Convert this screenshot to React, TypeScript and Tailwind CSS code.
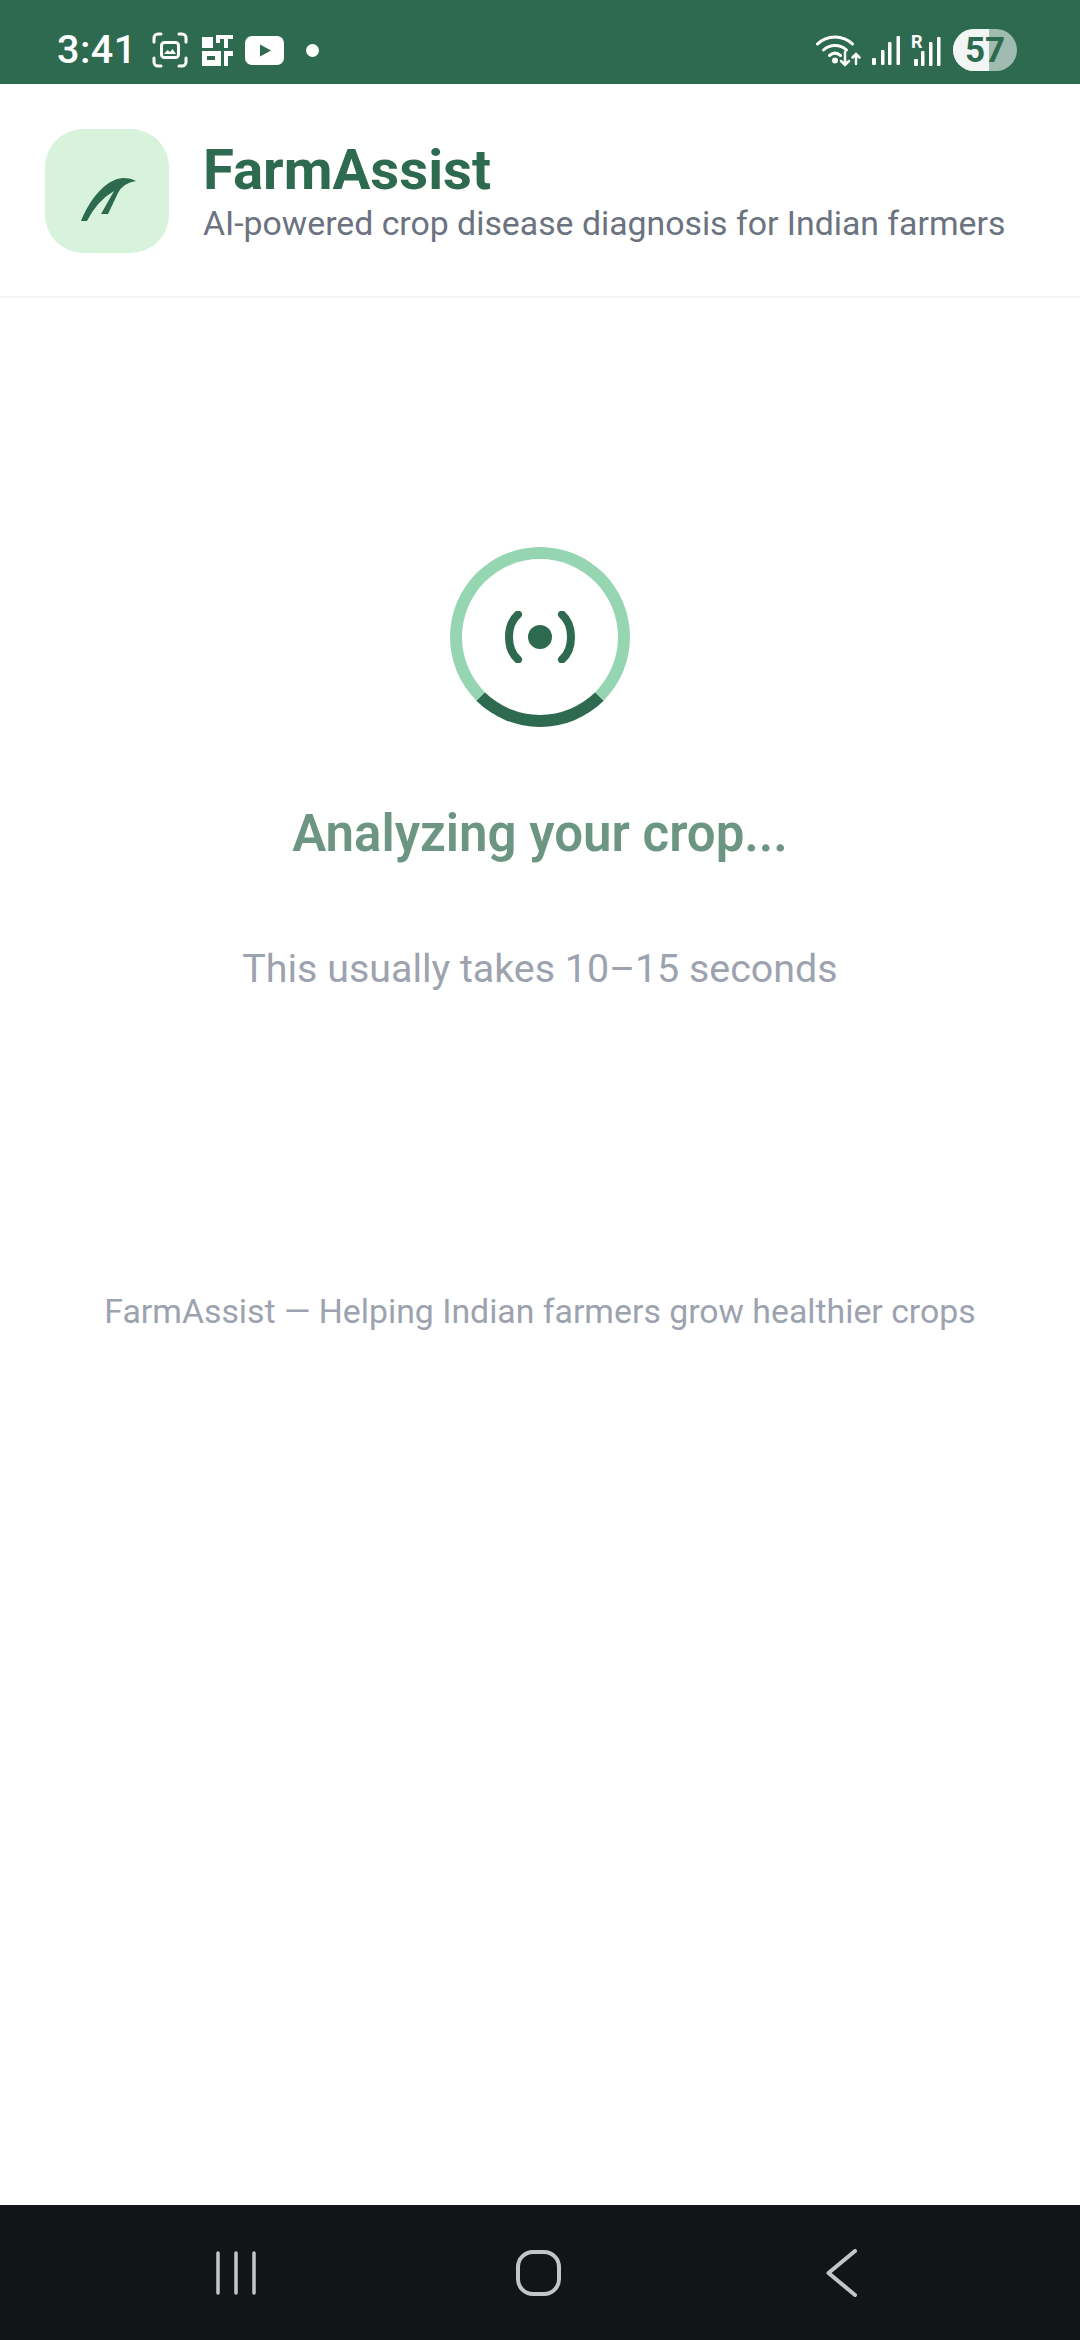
function StatusBar() {
  return (
    <div className="flex h-[84px] shrink-0 items-center bg-[#2d6a4f] pt-[16px] pl-[57px] pr-[63px] text-white">
      <span className="w-[78px] text-[39.500px] leading-none font-medium tracking-[0.5px]">3:41</span>

      <svg className="ml-[17px]" width="36" height="36" viewBox="0 0 36 36" fill="none" stroke="#fff" strokeWidth="3" strokeLinecap="round">
        <path d="M9 2H6a4 4 0 0 0-4 4v4M27 2h3a4 4 0 0 1 4 4v4M9 34H6a4 4 0 0 1-4-4v-4M27 34h3a4 4 0 0 0 4-4v-4" />
        <rect x="9.500" y="10.500" width="17" height="15" rx="3" />
        <path d="M12 22l3.500-4 2.500 2 2.500-3 3.500 5z" fill="#fff" stroke="none" />
      </svg>

      <svg className="ml-[14px]" width="31" height="31" viewBox="0 0 31 31" fill="#fff">
        <path d="M0 2h11v11H0zM14 0h17v4h-5v9h-4V4h-4v4h-4z" />
        <path d="M0 16h19v15H0zM22 16h9v5h-5v10h-4z" />
        <rect x="5" y="21" width="8" height="4" fill="#2d6a4f" />
      </svg>

      <svg className="ml-[12px]" width="39" height="29" viewBox="0 0 39 29">
        <rect width="39" height="29" rx="7" fill="#fff" />
        <path d="M15 8.500l11 6-11 6z" fill="#2d6a4f" />
      </svg>

      <div className="ml-[22px] size-[13px] rounded-full bg-white" />

      <div className="ml-auto flex items-center">
        <svg width="47" height="34" viewBox="0 0 47 34" fill="none" stroke="#fff" strokeWidth="3" strokeLinecap="round">
          <path d="M1.500 11C11 1.500 27 1.500 36.500 11" />
          <path d="M7.500 17c6.500-6 16.500-6 23 0" />
          <path d="M13.500 22.500c3.500-3 7.500-3 11 0" />
          <circle cx="19" cy="27.500" r="1.500" fill="#fff" />
          <path d="M29 19v13M25 28l4 4 4-4M40 31V21M36.500 24.500L40 21l3.500 3.500" strokeWidth="2.500" />
        </svg>

        <svg className="ml-[9px]" width="28" height="30" viewBox="0 0 28 30" fill="#fff">
          <rect x="0" y="23" width="4" height="7" rx="1" />
          <rect x="9" y="15" width="3.500" height="15" rx="1" />
          <rect x="16" y="7" width="3.500" height="23" rx="1" />
          <rect x="24.500" y="1" width="3.500" height="29" rx="1" />
        </svg>

        <div className="relative ml-[11px] h-[32px] w-[30px]">
          <span className="absolute top-[-1px] left-0 text-[18px] leading-none font-bold">R</span>
          <svg className="absolute bottom-0 left-0" width="30" height="30" viewBox="0 0 30 30" fill="#fff">
            <rect x="3" y="23" width="4" height="7" rx="1" />
            <rect x="10" y="15" width="3.500" height="15" rx="1" />
            <rect x="18" y="6" width="3.500" height="24" rx="1" />
            <rect x="26" y="1" width="3.500" height="29" rx="1" />
          </svg>
        </div>

        <div className="relative ml-[12px] flex h-[42px] w-[64px] items-center justify-center overflow-hidden rounded-full bg-white/55">
          <div className="absolute inset-y-0 left-0 w-[36px] bg-white/85" />
          <span className="relative text-[35px] leading-none font-bold text-[#2d6a4f]">57</span>
        </div>
      </div>
    </div>
  )
}

function Header() {
  return (
    <header className="flex h-[214px] shrink-0 items-center border-b-2 border-[#f4f5f5] bg-white pt-[2px] pl-[45px] shadow-[0_1px_3px_rgba(0,0,0,0.02)]">
      <div className="size-[124px] shrink-0 rounded-[38px] bg-[#d8f3dc]">
        <svg width="124" height="124" viewBox="0 0 124 124" fill="#2d6a4f">
          <path d="M36 92C44 72 60 50 78 49Q86 49 91 52Q78 54 73 64L63 85H56L69 62Q52 72 42 92Z" />
        </svg>
      </div>

      <div className="ml-[34px] pt-[3px]">
        <h1 className="text-[56.300px] leading-[60px] font-bold text-[#2d6a4f]">FarmAssist</h1>
        <p className="mt-[3px] text-[33.800px] leading-[42px] text-[#6b7280]">AI-powered crop disease diagnosis for Indian farmers</p>
      </div>
    </header>
  )
}

function Loader() {
  return (
    <main className="flex flex-1 flex-col items-center bg-white pt-[249px]">
      <div className="relative flex size-[180px] items-center justify-center">
        <div className="absolute inset-0 rounded-full border-[12px] border-[#95d5b2] border-b-[#2d6a4f]" />
        <svg width="70" height="52" viewBox="0 0 70 52" fill="none" stroke="#2d6a4f" strokeWidth="8" strokeLinecap="round">
          <circle cx="35" cy="26" r="12" fill="#2d6a4f" stroke="none" />
          <path d="M13 3.500C1 14 1 38 13 48.500" />
          <path d="M57 3.500C69 14 69 38 57 48.500" />
        </svg>
      </div>

      <h2 className="mt-[79px] text-[51px] leading-[56px] font-semibold text-[#2d6a4f]/70">Analyzing your crop...</h2>
      <p className="mt-[84px] text-[39.400px] leading-[46px] text-[#9ca3af]">This usually takes 10–15 seconds</p>
      <p className="mt-[300px] text-[33.800px] leading-[40px] text-[#9ca3af]">FarmAssist — Helping Indian farmers grow healthier crops</p>
    </main>
  )
}

function NavBar() {
  return (
    <nav className="flex h-[135px] shrink-0 items-center bg-[#121418]">
      <svg className="ml-[214px]" width="44" height="44" viewBox="0 0 44 44" fill="none" stroke="#c4c5c7" strokeWidth="3.500" strokeLinecap="round">
        <path d="M4 2v40M22 2v40M40 2v40" />
      </svg>
      <div className="ml-[258px] h-[46px] w-[45px] rounded-[17px] border-4 border-[#c4c5c7]" />
      <svg className="ml-[265px]" width="31" height="48" viewBox="0 0 31 48" fill="none" stroke="#c4c5c7" strokeWidth="4" strokeLinecap="round" strokeLinejoin="round">
        <path d="M29 2L2.500 24 29 46" />
      </svg>
    </nav>
  )
}

export default function App() {
  return (
    <div className="flex h-[2340px] w-[1080px] flex-col overflow-hidden bg-white font-['Roboto',sans-serif]">
      <StatusBar />
      <Header />
      <Loader />
      <NavBar />
    </div>
  )
}
